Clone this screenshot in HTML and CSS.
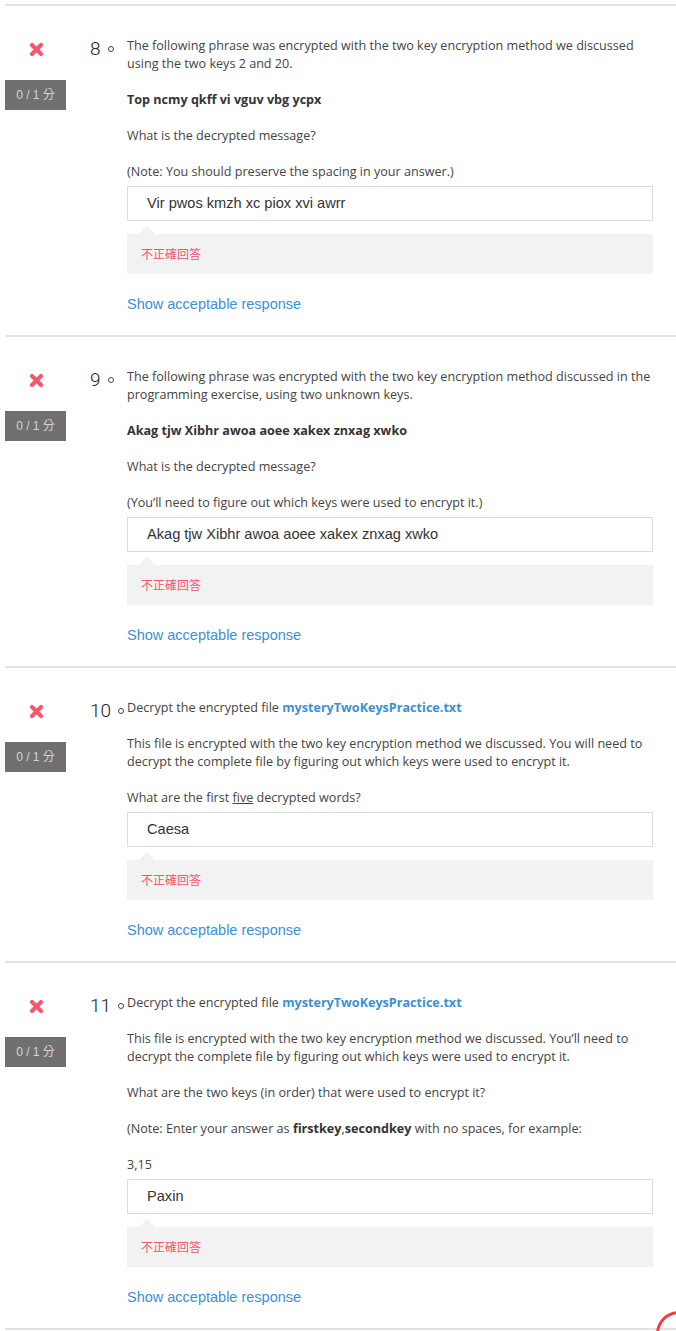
FILE: index.html
```html
<!DOCTYPE html>
<html>
<head>
<meta charset="utf-8">
<link rel="stylesheet" href="styles.css">
</head>
<body>
<div class="page">

  <section class="question">
    <div class="status">
      <svg class="xmark" viewBox="0 0 15 15" width="15" height="15"><path d="M3 3 L12 12 M12 3 L3 12" /></svg>
      <div class="score">0 / 1 分</div>
    </div>
    <div class="qhead"><span class="qnum">8</span><span class="qdot"></span></div>
    <div class="qbody">
      <p>The following phrase was encrypted with the two key encryption method we discussed using the two keys 2 and 20.</p>
      <p><strong>Top ncmy qkff vi vguv vbg ycpx</strong></p>
      <p>What is the decrypted message?</p>
      <p class="last">(Note: You should preserve the spacing in your answer.)</p>
      <div class="answer">Vir pwos kmzh xc piox xvi awrr</div>
      <div class="feedback">不正確回答</div>
      <a class="show" href="#">Show acceptable response</a>
    </div>
  </section>

  <section class="question">
    <div class="status">
      <svg class="xmark" viewBox="0 0 15 15" width="15" height="15"><path d="M3 3 L12 12 M12 3 L3 12" /></svg>
      <div class="score">0 / 1 分</div>
    </div>
    <div class="qhead"><span class="qnum">9</span><span class="qdot"></span></div>
    <div class="qbody">
      <p>The following phrase was encrypted with the two key encryption method discussed in the programming exercise, using two unknown keys.</p>
      <p><strong>Akag tjw Xibhr awoa aoee xakex znxag xwko</strong></p>
      <p>What is the decrypted message?</p>
      <p class="last">(You’ll need to figure out which keys were used to encrypt it.)</p>
      <div class="answer">Akag tjw Xibhr awoa aoee xakex znxag xwko</div>
      <div class="feedback">不正確回答</div>
      <a class="show" href="#">Show acceptable response</a>
    </div>
  </section>

  <section class="question">
    <div class="status">
      <svg class="xmark" viewBox="0 0 15 15" width="15" height="15"><path d="M3 3 L12 12 M12 3 L3 12" /></svg>
      <div class="score">0 / 1 分</div>
    </div>
    <div class="qhead"><span class="qnum">10</span><span class="qdot"></span></div>
    <div class="qbody">
      <p>Decrypt the encrypted file <a class="file" href="#">mysteryTwoKeysPractice.txt</a></p>
      <p>This file is encrypted with the two key encryption method we discussed. You will need to decrypt the complete file by figuring out which keys were used to encrypt it.</p>
      <p class="last">What are the first <u>five</u> decrypted words?</p>
      <div class="answer">Caesa</div>
      <div class="feedback">不正確回答</div>
      <a class="show" href="#">Show acceptable response</a>
    </div>
  </section>

  <section class="question">
    <div class="status">
      <svg class="xmark" viewBox="0 0 15 15" width="15" height="15"><path d="M3 3 L12 12 M12 3 L3 12" /></svg>
      <div class="score">0 / 1 分</div>
    </div>
    <div class="qhead"><span class="qnum">11</span><span class="qdot"></span></div>
    <div class="qbody">
      <p>Decrypt the encrypted file <a class="file" href="#">mysteryTwoKeysPractice.txt</a></p>
      <p>This file is encrypted with the two key encryption method we discussed. You’ll need to decrypt the complete file by figuring out which keys were used to encrypt it.</p>
      <p>What are the two keys (in order) that were used to encrypt it?</p>
      <p>(Note: Enter your answer as <strong>firstkey</strong>,<strong>secondkey</strong> with no spaces, for example:</p>
      <p class="last">3,15</p>
      <div class="answer">Paxin</div>
      <div class="feedback">不正確回答</div>
      <a class="show" href="#">Show acceptable response</a>
    </div>
  </section>

  <div class="question end"></div>
</div>
<div class="spinner"></div>
</body>
</html>
```

FILE: styles.css
```css
html, body {
  margin: 0;
  padding: 0;
  background: #ffffff;
}

body {
  font-family: "Open Sans", "Noto Sans CJK TC", sans-serif;
  color: #444444;
}

.page {
  padding: 4px 0 0 5px;
}

.question {
  display: flex;
  align-items: flex-start;
  border-top: 2px solid #e2e2e2;
  padding: 30px 0 22px 0;
}

.question.end {
  padding: 0;
}

.status {
  width: 61px;
  display: flex;
  flex-direction: column;
  align-items: center;
  padding-top: 6px;
}

.xmark {
  display: block;
  margin-left: 1px;
}

.xmark path {
  stroke: #f5576d;
  stroke-width: 4.2;
  stroke-linecap: round;
  fill: none;
}

.score {
  margin-top: 23px;
  width: 61px;
  height: 30px;
  background: #707070;
  color: #d4d4d4;
  font-family: "Liberation Sans", "Noto Sans CJK TC", sans-serif;
  font-size: 12px;
  line-height: 30px;
  text-align: center;
}

.qhead {
  margin-left: 24px;
  width: 37px;
  flex: none;
  display: flex;
  align-items: flex-start;
  margin-top: 3px;
}

.qnum {
  font-family: "Roboto", "Liberation Sans", sans-serif;
  font-weight: 300;
  font-size: 19px;
  line-height: 19px;
  color: #222222;
}

.qdot {
  width: 4px;
  height: 4px;
  border: 1px solid #444444;
  border-radius: 50%;
  margin: 7px 0 0 7px;
}

.qbody {
  width: 526px;
  flex: none;
  padding-top: 1px;
}

.qbody p {
  margin: 0 0 18px 0;
  font-size: 12.6px;
  line-height: 18px;
}

.qbody p.last {
  margin-bottom: 5px;
}

.qbody strong {
  color: #333333;
  font-weight: 700;
}

.file {
  color: #3d8fd6;
  font-weight: 700;
  text-decoration: none;
}

.answer {
  box-sizing: border-box;
  height: 35px;
  border: 1px solid #dddddd;
  padding-left: 19px;
  font-family: "Liberation Sans", sans-serif;
  font-size: 14.6px;
  line-height: 33px;
  color: #333333;
}

.feedback {
  position: relative;
  margin-top: 13px;
  height: 40px;
  background: #f2f2f2;
  padding-left: 14px;
  font-family: "Noto Sans CJK TC", sans-serif;
  font-size: 12px;
  line-height: 40px;
  color: #f2566f;
}

.feedback::before {
  content: "";
  position: absolute;
  left: 12px;
  top: -8px;
  border-left: 8px solid transparent;
  border-right: 8px solid transparent;
  border-bottom: 8px solid #f2f2f2;
}

.show {
  display: block;
  margin-top: 21px;
  font-family: "Liberation Sans", sans-serif;
  font-size: 14.5px;
  line-height: 18px;
  color: #3d8fd6;
  text-decoration: none;
}

.spinner {
  position: fixed;
  left: 656px;
  top: 1311px;
  width: 40px;
  height: 40px;
  border: 3px solid #f53b3b;
  border-radius: 50%;
}
```
